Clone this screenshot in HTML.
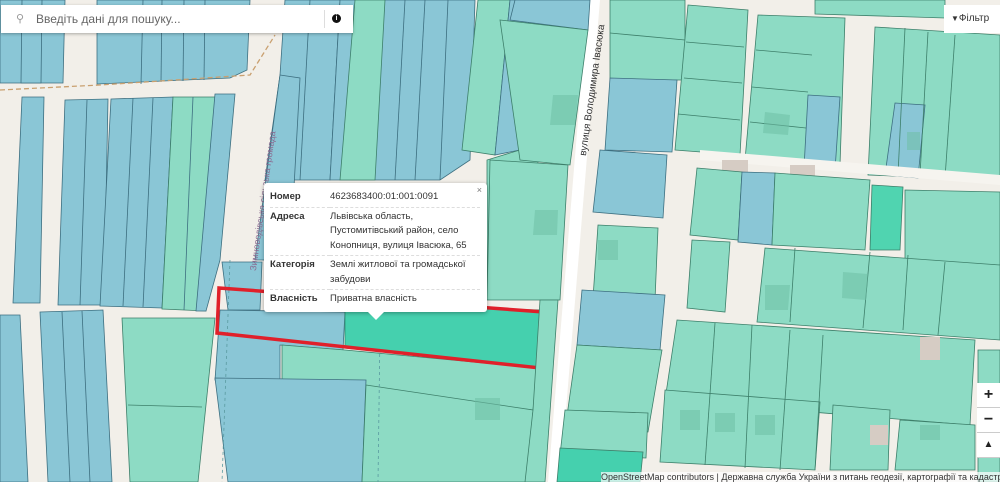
<!DOCTYPE html>
<html><head><meta charset="utf-8"><style>
body{margin:0;width:1000px;height:482px;overflow:hidden;background:#f2efe9;font-family:"Liberation Sans",sans-serif;position:relative}
svg{position:absolute;left:0;top:0}
.b{fill:#8ac6d6;stroke:#3d6f80;stroke-width:.8}
.g{fill:#8ddbc4;stroke:#3d7f6a;stroke-width:.8}
.s{fill:#6fbfa6;opacity:.55}
.r{fill:#d6ccc4}
#search{position:absolute;left:1px;top:5px;width:352px;height:28px;background:#fff;box-shadow:0 1px 3px rgba(0,0,0,.3)}
#search .t{position:absolute;left:35px;top:7px;font-size:12px;color:#666}
#filter{position:absolute;left:944px;top:5px;width:56px;height:28px;background:#fff;font-size:10px;color:#333;line-height:28px;white-space:nowrap;overflow:hidden}
#pop{position:absolute;left:264px;top:183px;width:223px;height:129px;background:#fff;border-radius:3px;box-shadow:0 1px 4px rgba(0,0,0,.35);font-size:9.5px;color:#333}
#pop table{position:absolute;left:6px;top:5px;width:210px;border-collapse:collapse}
#pop td{vertical-align:top;padding:2px 0 2px 0;line-height:14.5px;border-bottom:1px dashed #ddd}
#pop td.k{font-weight:bold;width:60px}
#pop:after{content:"";position:absolute;left:104px;bottom:-8px;border:8px solid transparent;border-top-color:#fff;border-bottom:0}
.zc{position:absolute;left:977px;width:23px;height:24px;background:#fff;font-size:16px;font-weight:bold;text-align:center;line-height:24px;color:#222;border-bottom:1px solid #ccc}
#attr{position:absolute;left:601px;top:472px;width:399px;height:10px;background:rgba(255,255,255,.7);font-size:9px;line-height:10px;color:#333;white-space:nowrap;overflow:hidden}
</style></head><body>
<svg width="1000" height="482">
<polygon class="b" points="0,0 65,0 63,83 0,83"/>
<polygon class="b" points="22,0 42,0 41,83 21,83"/>
<polygon class="b" points="97,0 250,0 247,70 230,78 97,84"/>
<line x1="143" y1="0" x2="141" y2="84" stroke="#3d6f80" stroke-width=".8"/>
<line x1="162" y1="0" x2="161" y2="82" stroke="#3d6f80" stroke-width=".8"/>
<line x1="184" y1="0" x2="183" y2="81" stroke="#3d6f80" stroke-width=".8"/>
<line x1="205" y1="0" x2="204" y2="80" stroke="#3d6f80" stroke-width=".8"/>
<path d="M0,90 L100,85 L250,75 L275,35" stroke="#c9a070" stroke-width="1.3" stroke-dasharray="5,3" fill="none"/>
<polygon class="b" points="22,97 44,97 40,303 13,303"/>
<polygon class="b" points="65,100 108,99 104,305 58,305"/>
<polygon class="b" points="111,99 173,97 162,308 100,306"/>
<polygon class="g" points="173,97 215,97 206,311 162,309"/>
<polygon class="b" points="215,94 235,94 220,260 206,311 196,311"/>
<line x1="87" y1="100" x2="80" y2="305" stroke="#3d6f80" stroke-width=".8"/>
<line x1="133" y1="98" x2="123" y2="306" stroke="#3d6f80" stroke-width=".8"/>
<line x1="153" y1="98" x2="143" y2="307" stroke="#3d6f80" stroke-width=".8"/>
<line x1="193" y1="97" x2="184" y2="310" stroke="#3d6f80" stroke-width=".8"/>
<polygon class="b" points="0,315 20,315 28,482 0,482"/>
<polygon class="b" points="40,312 103,310 112,482 48,482"/>
<line x1="62" y1="312" x2="70" y2="482" stroke="#3d6f80" stroke-width=".8"/>
<line x1="82" y1="311" x2="90" y2="482" stroke="#3d6f80" stroke-width=".8"/>
<polygon class="g" points="122,318 215,318 198,482 130,482"/>
<line x1="128" y1="405" x2="202" y2="407" stroke="#3d7f6a" stroke-width=".8"/>
<polygon class="b" points="285,0 340,0 330,180 265,180 280,75"/>
<polygon class="b" points="280,75 300,78 290,260 255,260"/>
<polygon class="b" points="340,0 475,0 470,160 440,180 330,180"/>
<polygon class="g" points="355,0 385,0 375,180 340,180"/>
<line x1="310" y1="0" x2="300" y2="180" stroke="#3d6f80" stroke-width=".8"/>
<line x1="405" y1="0" x2="395" y2="180" stroke="#3d6f80" stroke-width=".8"/>
<line x1="425" y1="0" x2="415" y2="180" stroke="#3d6f80" stroke-width=".8"/>
<line x1="448" y1="0" x2="440" y2="180" stroke="#3d6f80" stroke-width=".8"/>
<polygon class="g" points="478,0 510,0 495,155 462,150"/>
<polygon class="b" points="510,0 530,0 520,150 495,155"/>
<polygon class="g" points="530,0 548,0 530,290 487,290 487,160 520,150"/>
<polygon class="b" points="222,262 262,262 260,310 228,310"/>
<polygon class="b" points="220,310 345,312 343,350 280,345 280,380 215,380"/>
<polygon class="g" points="282,345 345,350 538,368 533,410 282,380"/>
<polygon class="b" points="215,378 366,380 362,482 228,482"/>
<polygon class="g" points="366,385 533,410 528,482 362,482"/>
<line x1="380" y1="330" x2="378" y2="482" stroke="#5a9aa0" stroke-width=".8" stroke-dasharray="3,3"/>
<line x1="230" y1="260" x2="222" y2="482" stroke="#5a9aa0" stroke-width=".8" stroke-dasharray="3,3"/>
<polygon class="s" points="475,398 500,398 500,420 475,420"/>
<polygon fill="#45d0ae" stroke="#2a9070" stroke-width=".8" points="345,305 543,310 540,368 345,348"/>
<polygon fill="none" stroke="#e0202a" stroke-width="3.5" points="219,288 544,312 540,368 217,333"/>
<polygon fill="#fff" points="588,0 600,0 560,482 548,482"/>
<polygon class="b" points="515,0 590,0 588,30 510,20"/>
<polygon class="g" points="500,20 588,30 570,165 520,160"/>
<polygon class="g" points="490,160 568,165 560,300 487,300"/>
<polygon class="g" points="540,300 558,300 545,482 525,482 533,410"/>
<polygon class="s" points="553,95 578,95 575,125 550,125"/>
<polygon class="s" points="535,210 558,210 557,235 533,235"/>
<polygon class="g" points="610,0 685,0 685,80 610,80"/>
<line x1="610" y1="33" x2="685" y2="40" stroke="#3d7f6a" stroke-width=".8"/>
<polygon class="b" points="610,78 677,80 672,152 605,150"/>
<polygon class="b" points="600,150 667,155 663,218 593,212"/>
<polygon class="g" points="688,5 748,10 740,155 675,150"/>
<line x1="686" y1="42" x2="744" y2="47" stroke="#3d7f6a" stroke-width=".8"/>
<line x1="684" y1="78" x2="742" y2="83" stroke="#3d7f6a" stroke-width=".8"/>
<line x1="678" y1="114" x2="740" y2="120" stroke="#3d7f6a" stroke-width=".8"/>
<polygon class="g" points="758,15 845,18 840,165 745,160"/>
<line x1="756" y1="50" x2="812" y2="55" stroke="#3d7f6a" stroke-width=".8"/>
<line x1="752" y1="87" x2="808" y2="92" stroke="#3d7f6a" stroke-width=".8"/>
<line x1="750" y1="122" x2="806" y2="128" stroke="#3d7f6a" stroke-width=".8"/>
<polygon class="b" points="808,95 840,97 835,170 804,168"/>
<polygon class="g" points="815,0 945,0 945,18 815,14"/>
<polygon class="g" points="875,27 1000,35 1000,180 868,175"/>
<polygon class="b" points="895,103 925,105 918,178 885,175"/>
<line x1="905" y1="28" x2="898" y2="175" stroke="#3d7f6a" stroke-width=".8"/>
<line x1="928" y1="32" x2="920" y2="175" stroke="#3d7f6a" stroke-width=".8"/>
<line x1="955" y1="35" x2="945" y2="178" stroke="#3d7f6a" stroke-width=".8"/>
<polygon fill="#f6f4ef" points="700,150 1000,175 1000,185 700,160"/>
<polygon class="r" points="722,160 748,160 748,172 722,172"/>
<polygon class="r" points="790,165 815,165 815,178 790,178"/>
<polygon class="g" points="697,168 742,172 738,240 690,235"/>
<polygon class="b" points="742,172 775,173 772,245 738,242"/>
<polygon class="g" points="775,173 870,180 865,250 772,245"/>
<polygon fill="#50d4b0" stroke="#3d7f6a" stroke-width=".8" points="872,185 903,187 900,250 870,250"/>
<polygon class="g" points="905,190 1000,192 1000,265 905,262"/>
<polygon class="g" points="598,225 658,228 655,300 593,298"/>
<polygon class="b" points="582,290 665,295 660,350 577,345"/>
<polygon class="g" points="577,345 662,350 648,432 565,430"/>
<polygon class="g" points="565,410 648,413 646,458 560,455"/>
<polygon fill="#45d0ae" stroke="#3d7f6a" stroke-width=".8" points="560,448 643,452 640,482 557,482"/>
<polygon class="g" points="692,240 730,242 725,312 687,308"/>
<polygon class="g" points="765,248 1000,265 1000,340 757,322"/>
<line x1="795" y1="248" x2="790" y2="322" stroke="#3d7f6a" stroke-width=".8"/>
<line x1="870" y1="252" x2="863" y2="328" stroke="#3d7f6a" stroke-width=".8"/>
<line x1="908" y1="255" x2="903" y2="330" stroke="#3d7f6a" stroke-width=".8"/>
<line x1="945" y1="262" x2="938" y2="335" stroke="#3d7f6a" stroke-width=".8"/>
<polygon class="g" points="677,320 975,340 970,425 665,400"/>
<polygon class="g" points="665,390 820,402 815,470 660,462"/>
<line x1="715" y1="323" x2="705" y2="465" stroke="#3d7f6a" stroke-width=".8"/>
<line x1="752" y1="325" x2="745" y2="468" stroke="#3d7f6a" stroke-width=".8"/>
<line x1="790" y1="330" x2="780" y2="470" stroke="#3d7f6a" stroke-width=".8"/>
<line x1="823" y1="335" x2="815" y2="470" stroke="#3d7f6a" stroke-width=".8"/>
<polygon class="g" points="833,405 890,410 888,470 830,470"/>
<polygon class="g" points="900,420 975,425 975,470 895,470"/>
<polygon class="g" points="978,350 1000,350 1000,482 978,482"/>
<polygon class="s" points="598,240 618,240 618,260 598,260"/>
<polygon class="s" points="765,285 790,285 788,310 765,310"/>
<polygon class="s" points="843,272 868,274 866,300 842,298"/>
<polygon class="s" points="680,410 700,410 700,430 680,430"/>
<polygon class="s" points="715,413 735,413 735,432 715,432"/>
<polygon class="s" points="755,415 775,415 775,435 755,435"/>
<polygon class="s" points="920,425 940,425 940,440 920,440"/>
<polygon class="r" points="870,425 888,425 888,445 870,445"/>
<polygon class="r" points="920,337 940,337 940,360 920,360"/>
<polygon class="s" points="765,112 790,115 788,135 763,133"/>
<polygon class="s" points="907,132 920,132 920,150 907,150"/>
</svg>
<div style="position:absolute;font-size:9px;color:#8a6a90;transform:rotate(-82deg);transform-origin:left top;white-space:nowrap;top:270px;left:248px">Зимноводівська сільська громада</div>
<div style="position:absolute;left:578px;top:155px;font-size:10px;color:#333;transform:rotate(-82deg);transform-origin:left top;white-space:nowrap">вулиця Володимира Івасюка</div>
<div id="search"><span style="position:absolute;left:15px;top:7px;font-size:11px;color:#999">&#9906;</span><span class="t">Введіть дані для пошуку...</span><div style="position:absolute;left:323px;top:5px;width:1px;height:18px;background:#ddd"></div><div style="position:absolute;left:331px;top:9px;width:9px;height:9px;border-radius:50%;background:#111;color:#fff;font-size:7px;text-align:center;line-height:9px;font-weight:bold">i</div></div>
<div id="filter"><span style="font-size:8px;margin-left:7px">▼</span>Фільтр</div>
<div id="pop"><span style="position:absolute;right:5px;top:2px;font-size:9px;color:#777">×</span>
<table>
<tr><td class="k">Номер</td><td>4623683400:01:001:0091</td></tr>
<tr><td class="k">Адреса</td><td>Львівська область, Пустомитівський район, село Конопниця, вулиця Івасюка, 65</td></tr>
<tr><td class="k">Категорія</td><td>Землі житлової та громадської забудови</td></tr>
<tr><td class="k" style="border:0">Власність</td><td style="border:0">Приватна власність</td></tr>
</table></div>
<div class="zc" style="top:383px">+</div>
<div class="zc" style="top:408px">−</div>
<div class="zc" style="top:433px;font-size:10px">▲</div>
<div id="attr">OpenStreetMap contributors | Державна служба України з питань геодезії, картографії та кадастру</div>
</body></html>
